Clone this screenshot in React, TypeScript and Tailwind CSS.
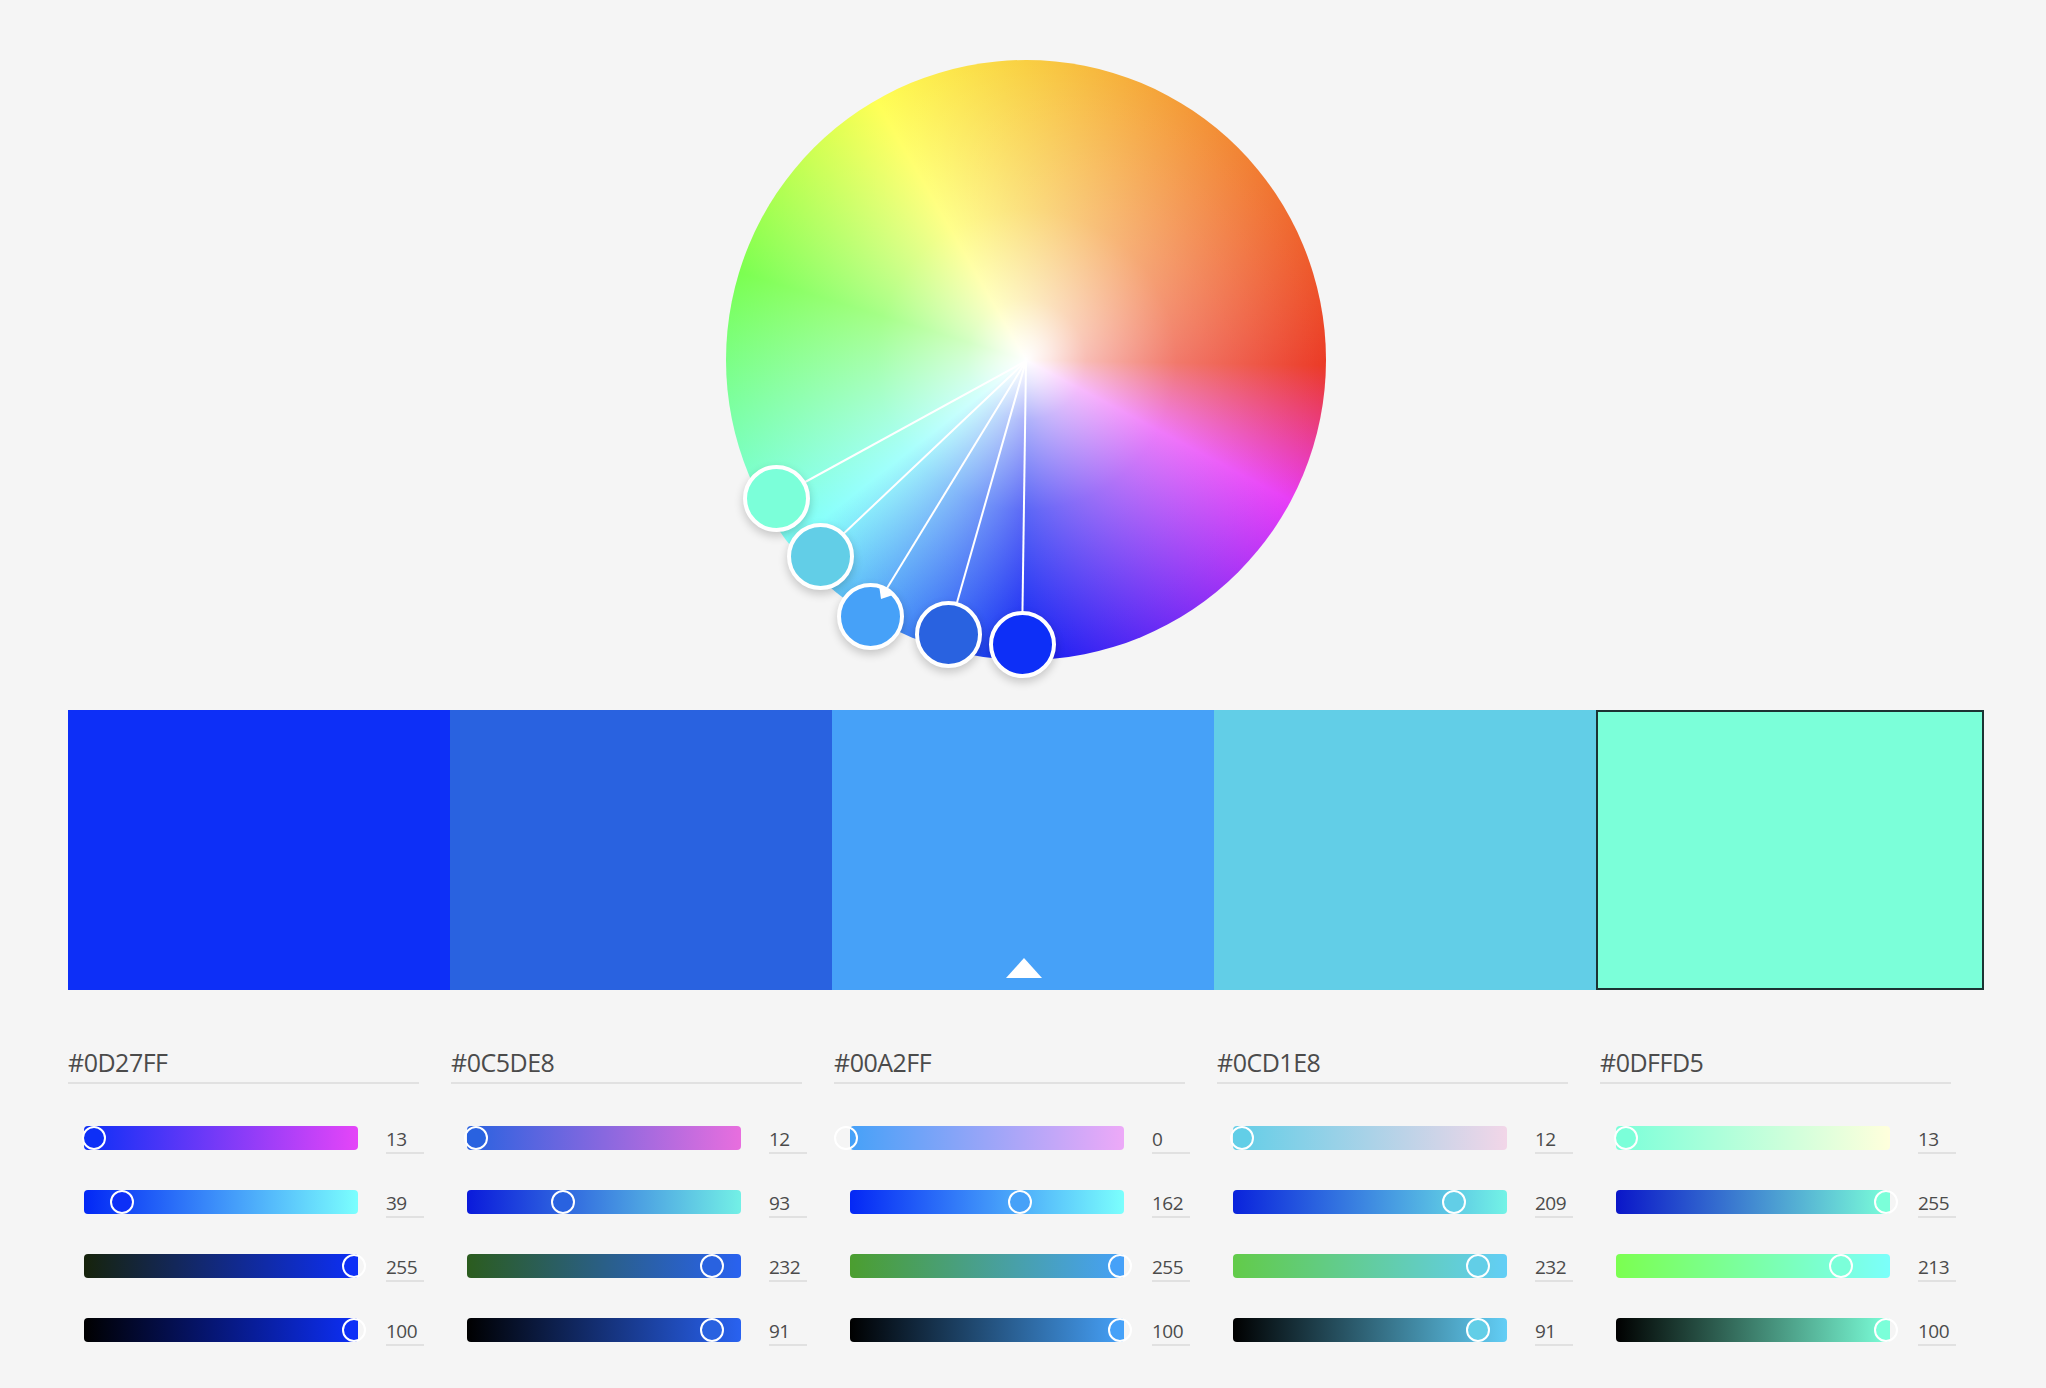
const HANDLES = [
  { color: "bg-[#7bffd9]", pos: "left-[16.5px] top-[404.5px]", x: 50, y: 438 },
  { color: "bg-[#62cee7]", pos: "left-[60.5px] top-[462.5px]", x: 94, y: 496 },
  { color: "bg-[#46a1f8]", pos: "left-[110.5px] top-[522.5px]", x: 144, y: 556 },
  { color: "bg-[#2962e0]", pos: "left-[188.5px] top-[540.5px]", x: 222, y: 574 },
  { color: "bg-[#0d2ff7]", pos: "left-[262.5px] top-[550.5px]", x: 296, y: 584 },
];

const SWATCHES = ["bg-[#0d2ff7]", "bg-[#2962e0]", "bg-[#46a1f8]", "bg-[#62cee7]"];

interface Row {
  value: number;
  max: number;
  gradient: string;
}

interface Panel {
  hex: string;
  fill: string;
  rows: Row[];
}

const PANELS: Panel[] = [
  {
    hex: "#0D27FF",
    fill: "bg-[#0d2ff7]",
    rows: [
      { value: 13, max: 255, gradient: "bg-[linear-gradient(90deg,#0d2ff7,#e545f8)]" },
      { value: 39, max: 255, gradient: "bg-[linear-gradient(90deg,#0227f5,#7bfffe)]" },
      { value: 255, max: 255, gradient: "bg-[linear-gradient(90deg,#16230b,#0d2ff7)]" },
      { value: 100, max: 100, gradient: "bg-[linear-gradient(90deg,#000000,#0d2ff7)]" },
    ],
  },
  {
    hex: "#0C5DE8",
    fill: "bg-[#2962e0]",
    rows: [
      { value: 12, max: 255, gradient: "bg-[linear-gradient(90deg,#2962e0,#e86ede)]" },
      { value: 93, max: 255, gradient: "bg-[linear-gradient(90deg,#0a1adb,#73f0e6)]" },
      { value: 232, max: 255, gradient: "bg-[linear-gradient(90deg,#2b5c1e,#2962f0)]" },
      { value: 91, max: 100, gradient: "bg-[linear-gradient(90deg,#000000,#2962f0)]" },
    ],
  },
  {
    hex: "#00A2FF",
    fill: "bg-[#46a1f8]",
    rows: [
      { value: 0, max: 255, gradient: "bg-[linear-gradient(90deg,#46a1f8,#eda9f8)]" },
      { value: 162, max: 255, gradient: "bg-[linear-gradient(90deg,#0427f5,#7bfffd)]" },
      { value: 255, max: 255, gradient: "bg-[linear-gradient(90deg,#4b9e2f,#46a1f8)]" },
      { value: 100, max: 100, gradient: "bg-[linear-gradient(90deg,#000000,#46a1f8)]" },
    ],
  },
  {
    hex: "#0CD1E8",
    fill: "bg-[#62cee7]",
    rows: [
      { value: 12, max: 255, gradient: "bg-[linear-gradient(90deg,#62cee7,#f2d6e8)]" },
      { value: 209, max: 255, gradient: "bg-[linear-gradient(90deg,#0a23dc,#73f3e6)]" },
      { value: 232, max: 255, gradient: "bg-[linear-gradient(90deg,#62cb49,#62cef6)]" },
      { value: 91, max: 100, gradient: "bg-[linear-gradient(90deg,#000000,#62cef6)]" },
    ],
  },
  {
    hex: "#0DFFD5",
    fill: "bg-[#7bffd9]",
    rows: [
      { value: 13, max: 255, gradient: "bg-[linear-gradient(90deg,#7bffd9,#ffffdc)]" },
      { value: 255, max: 255, gradient: "bg-[linear-gradient(90deg,#0a16c9,#7bffd9)]" },
      { value: 213, max: 255, gradient: "bg-[linear-gradient(90deg,#7bff50,#7bfffb)]" },
      { value: 100, max: 100, gradient: "bg-[linear-gradient(90deg,#000000,#7bffd9)]" },
    ],
  },
];

function ColorWheel() {
  return (
    <div className="relative h-[600px] w-[600px]">
      <div className="absolute inset-0 rounded-full bg-[conic-gradient(from_0deg,#f9cf42_0deg,#eb3a26_91deg,#e83df7_118deg,#0d1ff2_180deg,#7dfffb_232deg,#7bff50_287deg,#ffff55_330deg,#f9cf42_360deg)]" />
      <div className="absolute inset-0 rounded-full bg-[radial-gradient(closest-side,#ffffff_0%,rgba(255,255,255,0.88)_8%,rgba(255,255,255,0.66)_20%,rgba(255,255,255,0.32)_50%,rgba(255,255,255,0)_100%)]" />

      <svg className="absolute inset-0 overflow-visible" width="600" height="600">
        {HANDLES.map((h) => (
          <line key={h.x} x1="300" y1="301" x2={h.x} y2={h.y} stroke="#ffffff" strokeWidth="2" />
        ))}
      </svg>

      {HANDLES.map((h) => (
        <div
          key={h.x}
          className={`absolute h-[67px] w-[67px] rounded-full border-4 border-white shadow-[0_4px_10px_rgba(0,0,0,0.2)] ${h.color} ${h.pos}`}
        />
      ))}

      {/* base colour marker */}
      <svg className="absolute inset-0 overflow-visible" width="600" height="600">
        <polygon points="153,525 167,535 155,539" fill="#ffffff" />
      </svg>
    </div>
  );
}

function SliderRow({ row, fill }: { row: Row; fill: string }) {
  const left = -16 + (row.value / row.max) * 274;

  return (
    <div className="flex h-[64px] pl-[16px]">
      <div className="relative h-6 w-[274px]">
        <div className={`absolute inset-0 overflow-hidden rounded-[4px] ${row.gradient}`}>
          <div className={`absolute top-0 h-6 w-6 rounded-full ${fill}`} style={{ left }} />
        </div>
        <div
          className="absolute top-0 h-6 w-6 rounded-full border-2 border-white"
          style={{ left }}
        />
      </div>
      <div className="ml-[28px] h-[28px] w-[38px] border-b-2 border-[#e1e1e1] text-[19px] leading-[26px] tracking-[-0.5px] text-[#4b4b4b]">
        {row.value}
      </div>
    </div>
  );
}

function ColorPanel({ panel }: { panel: Panel }) {
  return (
    <div className="w-[356px]">
      <div className="h-[36px] w-[351px] border-b-2 border-[#e1e1e1] text-[25px] leading-[28px] tracking-[-0.5px] text-[#4b4b4b]">
        {panel.hex}
      </div>
      <div className="mt-[42px]">
        {panel.rows.map((row, i) => (
          <SliderRow key={i} row={row} fill={panel.fill} />
        ))}
      </div>
    </div>
  );
}

export default function App() {
  return (
    <div className="min-h-screen bg-[#f5f5f5] font-['Open_Sans',sans-serif]">
      {/* Wheel */}
      <div className="pl-[726px] pt-[60px]">
        <ColorWheel />
      </div>

      {/* Swatches */}
      <div className="mt-[50px] flex h-[280px] pl-[68px]">
        {SWATCHES.map((s, i) => (
          <div key={s} className={`relative w-[382px] ${s}`}>
            {i === 2 && (
              <svg className="absolute bottom-[12px] left-[174px]" width="36" height="20">
                <polygon points="18,0 36,20 0,20" fill="#ffffff" />
              </svg>
            )}
          </div>
        ))}
        <div className="w-[388px] border-2 border-[#1c3333] bg-[#7bffd9]" />
      </div>

      {/* Sliders */}
      <div className="mt-[58px] flex gap-[27px] pl-[68px]">
        {PANELS.map((p) => (
          <ColorPanel key={p.hex} panel={p} />
        ))}
      </div>
    </div>
  );
}
